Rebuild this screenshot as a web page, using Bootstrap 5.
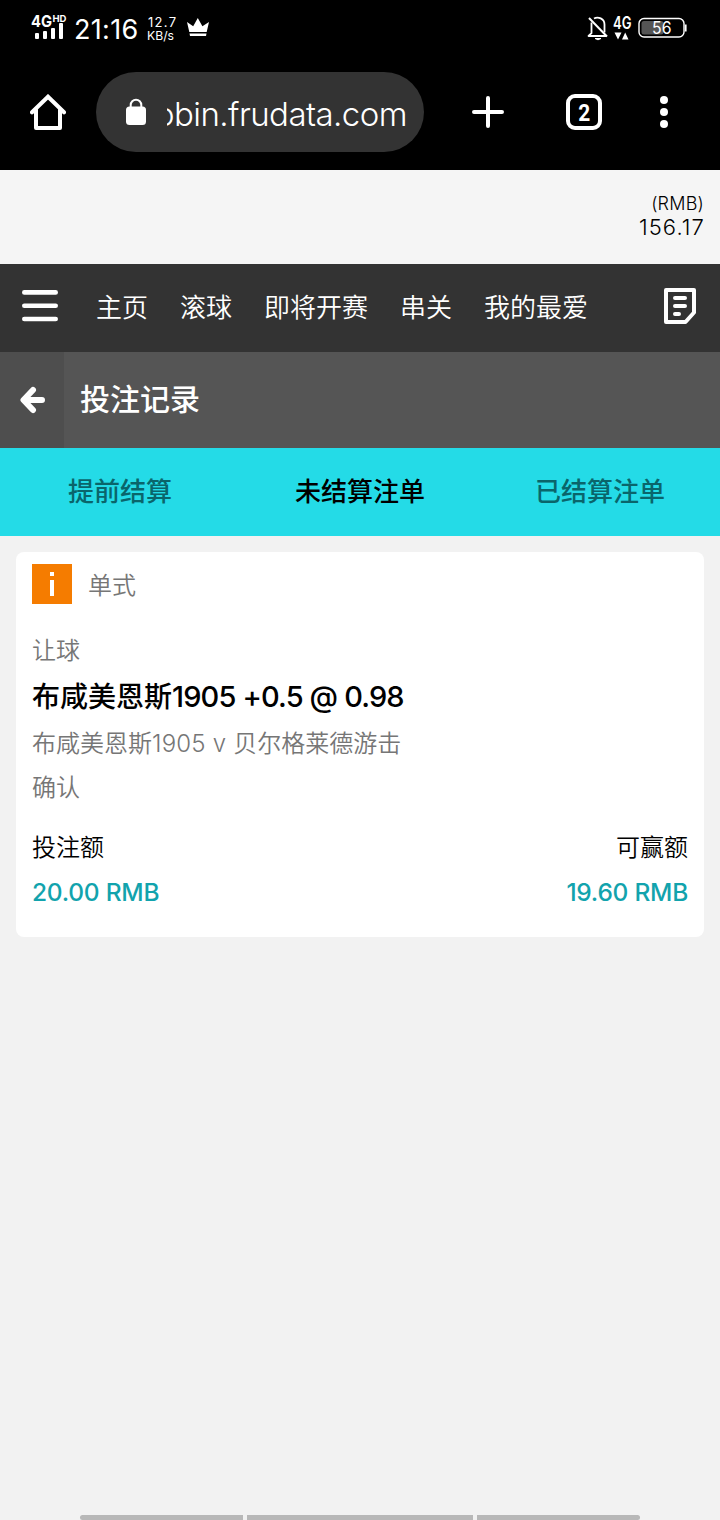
<!DOCTYPE html>
<html lang="zh-CN">
<head>
<meta charset="utf-8">
<meta name="viewport" content="width=device-width, initial-scale=1">
<title>投注记录</title>
<link href="https://cdn.jsdelivr.net/npm/bootstrap@5.3.0/dist/css/bootstrap.min.css" rel="stylesheet">
<style>
body { font-family: Inter, "Noto Sans CJK SC", sans-serif; background: #f2f2f2; color: #000; height: 1520px; overflow: hidden; }
svg { display: block; flex: none; }
.status-bar { height: 56px; background: #000; color: #fff; padding: 0 32px 0 31px; }
.clock { font-size: 27px; line-height: 32px; margin: 3px 0 0 7px; width: 73px; white-space: nowrap; letter-spacing: .3px; }
.speed { width: 40px; margin-top: 2px; }
.browser-bar { height: 114px; background: #000; padding: 0 32px 2px 30px; }
.url-pill { width: 328px; height: 80px; border-radius: 40px; background: #333; color: #fff; margin-left: 30px; padding-left: 30px; }
.url-clip { width: 240px; margin-left: 21px; overflow: hidden; font-size: 33px; line-height: 48px; font-weight: 300; letter-spacing: -.55px; white-space: nowrap; }
.balance { height: 94px; background: #f5f5f5; padding: 22px 16px 0 0; font-weight: 300; }
.balance-cur { font-size: 18px; line-height: 24px; letter-spacing: .2px; }
.balance-num { font-size: 22px; line-height: 22px; letter-spacing: 1.1px; margin-right: -1px; }
.main-nav { height: 88px; background: #333; padding: 0 24px 0 22px; }
.main-nav .nav { margin-left: 22px; }
.main-nav .nav-link { font-size: 26px; line-height: 40px; padding: 0 16px; color: #fff; font-weight: 350; }
.title-bar { height: 96px; background: #555; }
.back-btn { width: 64px; background: #4e4e4e; }
.page-title { font-size: 30px; line-height: 44px; font-weight: 500; color: #fff; margin: -2px 0 0 16px; }
.bet-tabs { height: 88px; background: #24dbe7; }
.bet-tabs .nav-link { font-size: 26px; line-height: 40px; font-weight: 500; color: #0a656b; padding: 0; }
.bet-tabs .nav-link.active { color: #000; }
.bet-card { margin: 16px 16px 0; height: 385px; border: 0; border-radius: 8px; padding: 0 16px; }
.bet-head { height: 63px; margin-bottom: 14px; }
.info-box { width: 40px; height: 40px; background: #f57c00; }
.bet-text { font-size: 24px; line-height: 44px; font-weight: 350; white-space: nowrap; }
.muted-line { color: #767676; }
.match-year { letter-spacing: .2px; }
.bet-pick { font-size: 28px; line-height: 48px; font-weight: 500; margin: 0 0 1px; white-space: nowrap; }
.pick-odds { font-size: 29px; letter-spacing: -.85px; }
.amount { font-size: 24.5px; line-height: 44px; font-weight: 500; letter-spacing: -.25px; color: #12a3ad; }
.gesture { width: 560px; gap: 4px; }
.gesture span { height: 5px; background: #b8b8b8; }
</style>
</head>
<body class="d-flex flex-column">
<header>
  <div class="status-bar d-flex align-items-center">
    <svg width="36" height="30" viewBox="0 0 36 30" fill="#fff">
      <text x="0" y="14" font-size="16.5" font-weight="700" textLength="21" lengthAdjust="spacingAndGlyphs">4G</text>
      <text x="21.5" y="9" font-size="9.5" font-weight="700" textLength="14" lengthAdjust="spacingAndGlyphs">HD</text>
      <rect x="4" y="20" width="4" height="6" rx="1"/><rect x="12" y="18" width="4" height="8" rx="1"/><rect x="20" y="15" width="4" height="11" rx="1"/><rect x="28" y="10" width="4" height="16" rx="1"/>
    </svg>
    <div class="clock">21:16</div>
    <svg class="speed" height="28" viewBox="0 0 40 28" fill="#fff" font-size="13"><text x="1" y="12" textLength="28">12.7</text><text x="0" y="24.500" font-size="12" textLength="27" lengthAdjust="spacingAndGlyphs">KB/s</text></svg>
    <svg width="22" height="20" viewBox="0 0 22 20" fill="#fff"><path d="M0 4l6.200 4.300L10.800 0l4.600 8.300L22 4l-2.300 10H2.300z"/><path d="M2.500 15.500h17l-.5 2.500H3z"/></svg>
    <div class="ms-auto d-flex align-items-center">
      <svg width="22" height="26" viewBox="0 0 22 26" fill="none" stroke="#fff" stroke-width="1.800" stroke-linejoin="round"><path d="M4.500 7.500v10.700L1.500 21h18M7 3.500C11 1.300 17.500 3.500 17.500 9.500v8"/><path d="M2 3l18 18.500" stroke-width="2"/><path d="M8 23.500h6l-3 1.300z" fill="#fff" stroke-width="1"/></svg>
      <svg width="22" height="26" viewBox="0 0 22 26" fill="#fff" style="margin-left:3px"><text x="1" y="14" font-size="17" font-weight="600" textLength="18.500" lengthAdjust="spacingAndGlyphs">4G</text><path d="M2.500 17.500h7l-3.500 7zM10 24.500h6.500L13.200 17.500z"/></svg>
      <svg width="50" height="22" viewBox="0 0 50 22" style="margin-left:4px"><rect x="1" y="1.500" width="45" height="18.500" rx="5" fill="none" stroke="#fff" stroke-width="1.400"/><rect x="3.500" y="4" width="22" height="13.500" rx="2.500" fill="#555"/><path d="M47.700 7.500v7" stroke="#fff" stroke-width="1.800"/><text x="14" y="17" font-size="17" fill="#fff" textLength="19.500" lengthAdjust="spacingAndGlyphs">56</text></svg>
    </div>
  </div>
  <div class="browser-bar d-flex align-items-center">
    <svg width="36" height="36" viewBox="0 0 36 36" fill="none" stroke="#fff" stroke-width="4" stroke-linecap="round" stroke-linejoin="round"><path stroke-linejoin="miter" d="M2 18.300L18 2.700l16 15.600"/><path d="M6 16v18h24V16"/></svg>
    <div class="url-pill d-flex align-items-center">
      <svg width="20" height="28" viewBox="0 0 20 28"><rect y="8.500" width="20" height="18.500" rx="3.500" fill="#fff"/><path d="M4.700 9.500V7a5.300 5.300 0 0 1 10.600 0v2.500" fill="none" stroke="#fff" stroke-width="2"/></svg>
      <div class="url-clip d-flex justify-content-end mt-1"><span>obin.frudata.com</span></div>
    </div>
    <svg class="ms-5" width="32" height="32" viewBox="0 0 32 32" stroke="#fff" stroke-width="4" stroke-linecap="round"><path d="M16 2v28M2 16h28"/></svg>
    <svg style="margin-left:62px" width="36" height="36" viewBox="0 0 36 36"><rect x="2" y="2" width="32" height="32" rx="7" fill="none" stroke="#fff" stroke-width="4"/><text x="12.200" y="27" font-family="Roboto" font-size="24" font-weight="700" fill="#fff" textLength="12" lengthAdjust="spacingAndGlyphs">2</text></svg>
    <svg style="margin-left:58px" width="8" height="34" viewBox="0 0 8 34" fill="#fff" overflow="visible"><circle cx="4" cy="5" r="4"/><circle cx="4" cy="17" r="4"/><circle cx="4" cy="29" r="4"/></svg>
  </div>
</header>
<div class="balance text-end"><div class="balance-cur">(RMB)</div><div class="balance-num">156.17</div></div>
<nav class="main-nav d-flex align-items-center">
  <svg class="mb-1" width="36" height="32" viewBox="0 0 36 32" stroke="#fff" stroke-width="4.600" stroke-linecap="round"><path d="M2.300 2.400h31.400M2.300 15.700h31.400M2.300 29h31.400"/></svg>
  <div class="nav flex-nowrap"><a class="nav-link" href="#">主页</a><a class="nav-link" href="#">滚球</a><a class="nav-link" href="#">即将开赛</a><a class="nav-link" href="#">串关</a><a class="nav-link" href="#">我的最爱</a></div>
  <svg class="ms-auto" width="32" height="40" viewBox="0 0 32 40" fill="none" stroke="#fff" stroke-width="4"><path stroke-linejoin="round" d="M2 2h28v22.500L21.500 34H2z"/><path d="M11 10h10M11 18h10M11 26h4" stroke-linecap="round"/></svg>
</nav>
<div class="title-bar d-flex align-items-stretch">
  <a class="back-btn d-flex align-items-center justify-content-center" href="#"><svg width="26" height="28" viewBox="0 0 26 28" fill="none" stroke="#fff" stroke-width="6" stroke-linecap="round" stroke-linejoin="round"><path d="M14 4L4.500 14l9.500 10M5 14h18"/></svg></a>
  <h1 class="page-title align-self-center">投注记录</h1>
</div>
<nav class="bet-tabs nav nav-fill nav-justified align-items-center">
  <a class="nav-link" href="#">提前结算</a><a class="nav-link active" href="#">未结算注单</a><a class="nav-link" href="#">已结算注单</a>
</nav>
<main>
  <section class="card bet-card">
    <div class="bet-head d-flex align-items-center gap-3">
      <div class="info-box"><svg width="40" height="40" viewBox="0 0 40 40" fill="#fff"><path d="M18 8h4v4h-4zM18 16h4v16h-4z"/></svg></div>
      <div class="bet-text muted-line mt-1">单式</div>
    </div>
    <div class="bet-text muted-line">让球</div>
    <h2 class="bet-pick">布咸美恩斯<span class="pick-odds">1905 +0.5 @ 0.98</span></h2>
    <div class="bet-text muted-line">布咸美恩斯<span class="match-year">1905 v </span>贝尔格莱德游击</div>
    <div class="bet-text muted-line">确认</div>
    <div class="d-flex justify-content-between mt-3">
      <div><div class="bet-text">投注额</div><div class="amount">20.00 RMB</div></div>
      <div class="text-end"><div class="bet-text">可赢额</div><div class="amount">19.60 RMB</div></div>
    </div>
  </section>
</main>
<footer class="gesture d-flex mt-auto mx-auto"><span class="rounded-start" style="width:163px"></span><span class="flex-fill"></span><span class="rounded-end" style="width:163px"></span></footer>
<script src="https://cdn.jsdelivr.net/npm/bootstrap@5.3.0/dist/js/bootstrap.bundle.min.js"></script>
</body>
</html>
